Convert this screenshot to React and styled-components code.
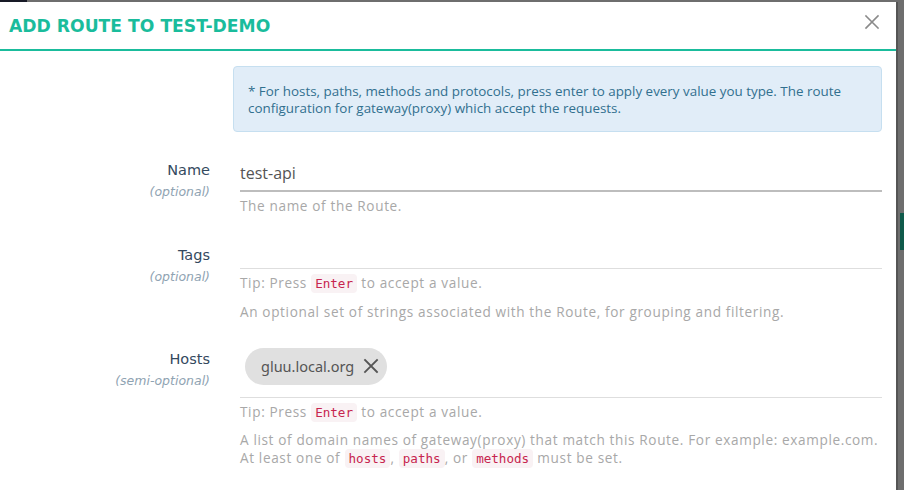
import React from "react";
import styled, { createGlobalStyle } from "styled-components";

const Global = createGlobalStyle`
  html, body {
    margin: 0;
    padding: 0;
    background: #6e6e6e;
    overflow: hidden;
  }
  body {
    font-family: "Open Sans", "Liberation Sans", sans-serif;
  }
`;

const Backdrop = styled.div`
  width: 904px;
  height: 490px;
  display: flex;
  flex-direction: column;
  background: #6e6e6e;
  position: relative;
`;

const TopStrip = styled.div`
  height: 2px;
  display: flex;
  flex-shrink: 0;
  div:first-child {
    width: 27px;
    background: #181a26;
  }
`;

const SideBadge = styled.div`
  position: absolute;
  right: 0;
  top: 213px;
  width: 4px;
  height: 37px;
  background: #0f5a4b;
`;

const Modal = styled.div`
  width: 898px;
  flex: 1;
  background: #fff;
  border-right: 2px solid #555;
  box-sizing: border-box;
  display: flex;
  flex-direction: column;
`;

const Header = styled.div`
  height: 47px;
  border-bottom: 2px solid #1abc9c;
  display: flex;
  align-items: center;
  justify-content: space-between;
  padding: 0 16px 0 9px;
  flex-shrink: 0;
`;

const Title = styled.h4`
  margin: 0;
  font-family: "DejaVu Sans", "Liberation Sans", sans-serif;
  font-weight: 700;
  font-size: 17.2px;
  color: #1abc9c;
`;

const Close = styled.button`
  border: none;
  background: none;
  padding: 0;
  width: 16px;
  height: 16px;
  margin-top: -7px;
  display: flex;
  cursor: pointer;
`;

const Body = styled.div`
  padding: 15px 14px 0 0;
  display: flex;
  flex-direction: column;
`;

const Info = styled.div`
  margin-left: 233px;
  background: #e1edf8;
  border: 1px solid #c6dff0;
  border-radius: 4px;
  color: #31708f;
  font-size: 13.4px;
  line-height: 17px;
  padding: 16px 14px 14px 14px;
  margin-bottom: 26px;
`;

const Row = styled.div`
  display: grid;
  grid-template-columns: 210px 1fr;
  column-gap: 30px;
  margin-bottom: ${(p) => p.gap || 30}px;
`;

const LabelCol = styled.div`
  text-align: right;
  padding-top: ${(p) => p.top || 0}px;
`;

const Label = styled.div`
  font-family: "DejaVu Sans", "Liberation Sans", sans-serif;
  font-size: 14.5px;
  color: #34495e;
  line-height: 20px;
`;

const Hint = styled.div`
  font-family: "DejaVu Sans", "Liberation Sans", sans-serif;
  font-size: 12.5px;
  font-style: italic;
  color: #8fa3b2;
  line-height: 20px;
  margin-top: 2px;
`;

const Field = styled.div`
  display: flex;
  flex-direction: column;
`;

const Input = styled.div`
  min-height: ${(p) => p.h}px;
  border-bottom: ${(p) => (p.strong ? "2px solid #bdbdbd" : "1px solid #dedede")};
  display: flex;
  align-items: center;
  font-size: 16px;
  color: #555;
  padding: ${(p) => p.pad || "0"};
  box-sizing: border-box;
`;

const Help = styled.p`
  margin: ${(p) => p.top || 6}px 0 0;
  font-size: 13.6px;
  letter-spacing: 0.63px;
  line-height: 18px;
  color: #a8a8a8;
`;

const Code = styled.code`
  font-family: "DejaVu Sans Mono", "Liberation Mono", monospace;
  font-size: 12.6px;
  letter-spacing: 0;
  color: #c7254e;
  background: #f9f2f4;
  border-radius: 4px;
  padding: 2px 4px;
`;

const Chip = styled.span`
  display: inline-flex;
  align-items: center;
  gap: 9px;
  height: 37px;
  padding: 0 8px 0 16px;
  border-radius: 19px;
  background: #e0e0e0;
  font-family: "Noto Sans", "Liberation Sans", sans-serif;
  font-size: 14.5px;
  color: #555;
`;

const X = ({ size, color, stroke }) => (
  <svg width={size} height={size} viewBox="0 0 16 16">
    <path d="M2 2L14 14M14 2L2 14" stroke={color} strokeWidth={stroke} strokeLinecap="square" />
  </svg>
);

export default function App() {
  return (
    <>
      <Global />
      <Backdrop>
        <TopStrip>
          <div />
        </TopStrip>
        <Modal>
          <Header>
            <Title>ADD ROUTE TO TEST-DEMO</Title>
            <Close aria-label="close">
              <X size={16} color="#8a8a8a" stroke={1.6} />
            </Close>
          </Header>
          <Body>
            <Info>
              * For hosts, paths, methods and protocols, press enter to apply every value you type. The route
              configuration for gateway(proxy) which accept the requests.
            </Info>

            <Row gap={30}>
              <LabelCol top={2}>
                <Label>Name</Label>
                <Hint>(optional)</Hint>
              </LabelCol>
              <Field>
                <Input h={34} strong pad="0 0 3px 0">test-api</Input>
                <Help top={5}>The name of the Route.</Help>
              </Field>
            </Row>

            <Row gap={25}>
              <LabelCol top={0}>
                <Label>Tags</Label>
                <Hint>(optional)</Hint>
              </LabelCol>
              <Field>
                <Input h={24} />
                <Help top={5}>
                  Tip: Press <Code>Enter</Code> to accept a value.
                </Help>
                <Help top={10}>An optional set of strings associated with the Route, for grouping and filtering.</Help>
              </Field>
            </Row>

            <Row gap={20}>
              <LabelCol top={3}>
                <Label>Hosts</Label>
                <Hint>(semi-optional)</Hint>
              </LabelCol>
              <Field>
                <Input h={52} pad="1px 0 12px 5px">
                  <Chip>
                    gluu.local.org
                    <X size={16} color="#555" stroke={1.8} />
                  </Chip>
                </Input>
                <Help top={5}>
                  Tip: Press <Code>Enter</Code> to accept a value.
                </Help>
                <Help top={9}>
                  A list of domain names of gateway(proxy) that match this Route. For example: example.com.
                  <br />
                  At least one of <Code>hosts</Code>, <Code>paths</Code>, or <Code>methods</Code> must be set.
                </Help>
              </Field>
            </Row>
          </Body>
        </Modal>
        <SideBadge />
      </Backdrop>
    </>
  );
}
